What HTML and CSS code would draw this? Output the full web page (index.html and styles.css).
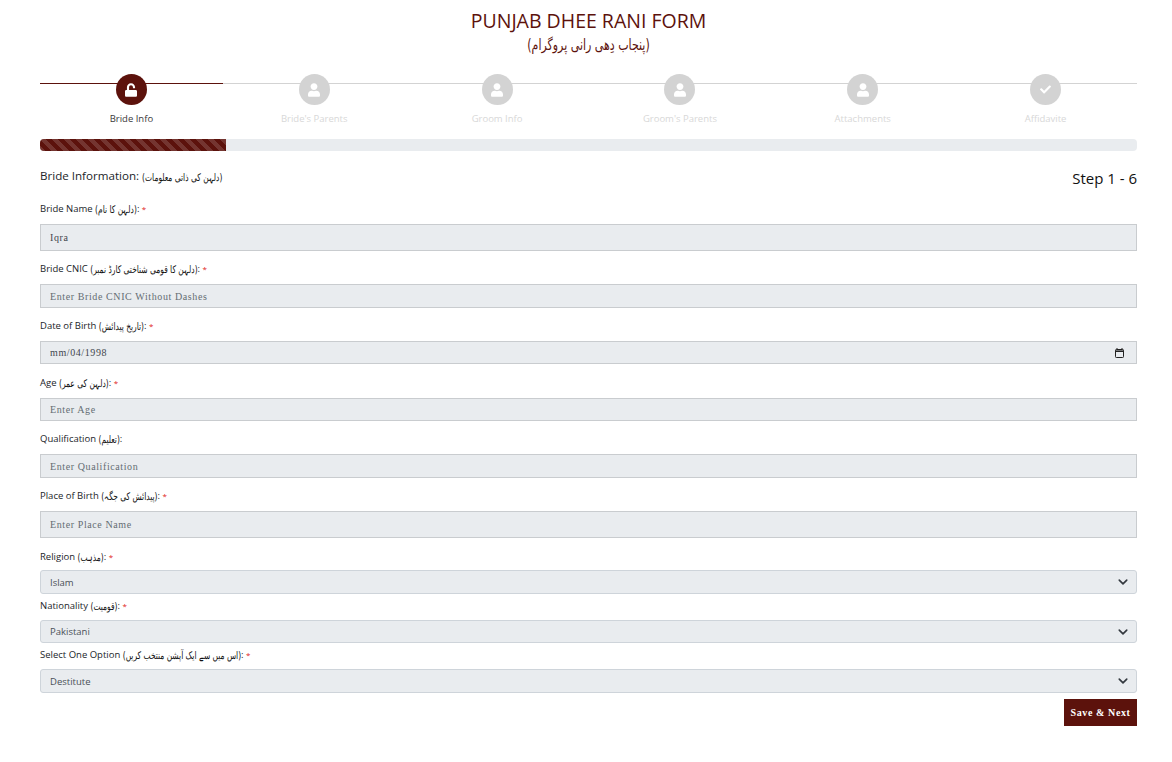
FILE: index.html
```html
<!DOCTYPE html>
<html lang="en">
<head>
<meta charset="UTF-8" />
<meta name="viewport" content="width=device-width, initial-scale=1" />
<title>Punjab Dhee Rani Form</title>
<link rel="stylesheet" href="styles.css">
</head>
<body>
<div class="page">
  <header class="form-title">
    <h1>PUNJAB DHEE RANI FORM</h1>
    <h2 dir="rtl" lang="ur">(پنجاب دِھی رانی پروگرام)</h2>
  </header>

  <ul class="stepper">
    <li class="step active">
      <span class="step-icon"><svg viewBox="0 0 448 512"><path d="M400 256H152V152.9c0-39.6 31.7-72.5 71.3-72.9 40-.4 72.7 32.1 72.7 72v16c0 13.3 10.7 24 24 24h32c13.3 0 24-10.7 24-24v-16C376 68 307.5-.3 223.5 0 139.5.3 72 69.5 72 153.5V256H48c-26.5 0-48 21.5-48 48v160c0 26.5 21.5 48 48 48h352c26.5 0 48-21.5 48-48V304c0-26.5-21.5-48-48-48z"/></svg></span>
      <span class="step-name">Bride Info</span>
    </li>
    <li class="step">
      <span class="step-icon"><svg viewBox="0 0 448 512"><path d="M224 256c70.7 0 128-57.3 128-128S294.7 0 224 0 96 57.3 96 128s57.3 128 128 128zm89.6 32h-16.7c-22.2 10.2-46.9 16-72.9 16s-50.6-5.8-72.9-16h-16.7C60.2 288 0 348.2 0 422.4V464c0 26.5 21.5 48 48 48h352c26.5 0 48-21.5 48-48v-41.6c0-74.2-60.2-134.4-134.4-134.4z"/></svg></span>
      <span class="step-name">Bride's Parents</span>
    </li>
    <li class="step">
      <span class="step-icon"><svg viewBox="0 0 448 512"><path d="M224 256c70.7 0 128-57.3 128-128S294.7 0 224 0 96 57.3 96 128s57.3 128 128 128zm89.6 32h-16.7c-22.2 10.2-46.9 16-72.9 16s-50.6-5.8-72.9-16h-16.7C60.2 288 0 348.2 0 422.4V464c0 26.5 21.5 48 48 48h352c26.5 0 48-21.5 48-48v-41.6c0-74.2-60.2-134.4-134.4-134.4z"/></svg></span>
      <span class="step-name">Groom Info</span>
    </li>
    <li class="step">
      <span class="step-icon"><svg viewBox="0 0 448 512"><path d="M224 256c70.7 0 128-57.3 128-128S294.7 0 224 0 96 57.3 96 128s57.3 128 128 128zm89.6 32h-16.7c-22.2 10.2-46.9 16-72.9 16s-50.6-5.8-72.9-16h-16.7C60.2 288 0 348.2 0 422.4V464c0 26.5 21.5 48 48 48h352c26.5 0 48-21.5 48-48v-41.6c0-74.2-60.2-134.4-134.4-134.4z"/></svg></span>
      <span class="step-name">Groom's Parents</span>
    </li>
    <li class="step">
      <span class="step-icon"><svg viewBox="0 0 448 512"><path d="M224 256c70.7 0 128-57.3 128-128S294.7 0 224 0 96 57.3 96 128s57.3 128 128 128zm89.6 32h-16.7c-22.2 10.2-46.9 16-72.9 16s-50.6-5.8-72.9-16h-16.7C60.2 288 0 348.2 0 422.4V464c0 26.5 21.5 48 48 48h352c26.5 0 48-21.5 48-48v-41.6c0-74.2-60.2-134.4-134.4-134.4z"/></svg></span>
      <span class="step-name">Attachments</span>
    </li>
    <li class="step">
      <span class="step-icon icon-check"><svg viewBox="0 0 512 512"><path d="M173.898 439.404l-166.4-166.4c-9.997-9.997-9.997-26.206 0-36.204l36.203-36.204c9.997-9.998 26.207-9.998 36.204 0L192 312.69 432.095 72.596c9.997-9.997 26.207-9.997 36.204 0l36.203 36.204c9.997 9.997 9.997 26.206 0 36.204l-294.4 294.401c-9.998 9.997-26.207 9.997-36.204-.001z"/></svg></span>
      <span class="step-name">Affidavite</span>
    </li>
  </ul>

  <div class="progress"><div class="progress-bar"></div></div>

  <div class="section-head">
    <h3>Bride Information: <span class="ur" dir="rtl" lang="ur">(دلہن کی ذاتی معلومات)</span></h3>
    <span class="step-count">Step 1 - 6</span>
  </div>

  <form>
    <div class="field">
      <label>Bride Name <span class="ur" dir="rtl" lang="ur">(دلہن کا نام)</span>: <span class="req">*</span></label>
      <input class="control control-lg" type="text" value="Iqra">
    </div>
    <div class="field">
      <label>Bride CNIC <span class="ur" dir="rtl" lang="ur">(دلہن کا قومی شناختی کارڈ نمبر)</span>: <span class="req">*</span></label>
      <input class="control" type="text" placeholder="Enter Bride CNIC Without Dashes">
    </div>
    <div class="field field-date">
      <label>Date of Birth <span class="ur" dir="rtl" lang="ur">(تاریخ پیدائش)</span>: <span class="req">*</span></label>
      <div class="date-wrap">
        <input class="control control-sm" type="text" value="mm/04/1998">
        <svg class="date-icon" viewBox="0 0 9 10"><path d="M2 0v1.5M7 0v1.5"/><rect x="0.5" y="1.5" width="8" height="8" rx="0.8"/><path class="date-top" d="M0.5 3.2h8"/></svg>
      </div>
    </div>
    <div class="field">
      <label>Age <span class="ur" dir="rtl" lang="ur">(دلہن کی عمر)</span>: <span class="req">*</span></label>
      <input class="control control-sm" type="text" placeholder="Enter Age">
    </div>
    <div class="field">
      <label>Qualification <span class="ur" dir="rtl" lang="ur">(تعلیم)</span>:</label>
      <input class="control" type="text" placeholder="Enter Qualification">
    </div>
    <div class="field field-last">
      <label>Place of Birth <span class="ur" dir="rtl" lang="ur">(پیدائش کی جگہ)</span>: <span class="req">*</span></label>
      <input class="control control-lg" type="text" placeholder="Enter Place Name">
    </div>
    <div class="field field-select field-religion">
      <label>Religion <span class="ur" dir="rtl" lang="ur">(مذہب)</span>: <span class="req">*</span></label>
      <select class="picker"><option>Islam</option></select>
    </div>
    <div class="field field-select">
      <label>Nationality <span class="ur" dir="rtl" lang="ur">(قومیت)</span>: <span class="req">*</span></label>
      <select class="picker picker-sm"><option>Pakistani</option></select>
    </div>
    <div class="field field-select">
      <label>Select One Option <span class="ur" dir="rtl" lang="ur">(اس میں سے ایک آپشن منتخب کریں)</span>: <span class="req">*</span></label>
      <select class="picker"><option>Destitute</option></select>
    </div>
    <div class="actions">
      <button type="button" class="btn-next">Save &amp; Next</button>
    </div>
  </form>
</div>
</body>
</html>
```

FILE: styles.css
```css
/* --- RESET & BASE --- */
*, *::before, *::after {
  box-sizing: border-box;
}
body {
  margin: 0;
  background: #fff;
  color: #212529;
  font-family: 'Open Sans', 'Noto Sans', sans-serif;
  font-size: 9.5px;
}
.page {
  padding: 10px 35px 0 40px;
}
/* no nastaliq font here, so the urdu is stretched a bit to get its height */
.ur {
  display: inline-block;
  font-family: 'DejaVu Sans', sans-serif;
  font-size: 7.5px;
  color: #111;
  transform: scaleY(1.4);
}

/* --- TITLE --- */
.form-title {
  text-align: center;
  color: #5c120c;
}
.form-title h1 {
  margin: 0;
  font-size: 19.5px;
  font-weight: 400;
  line-height: 22px;
}
.form-title h2 {
  margin: 3px 0 0;
  font-family: 'DejaVu Sans', sans-serif;
  font-size: 11px;
  font-weight: 400;
  line-height: 22px;
  transform: scaleY(1.4);
}

/* --- STEPPER --- */
.stepper {
  display: flex;
  margin: 17px 0 0;
  padding: 0;
  list-style: none;
}
.step {
  position: relative;
  flex: 1;
  display: flex;
  flex-direction: column;
  align-items: center;
  color: #d8d8d8;
}
.step::before {
  content: "";
  position: absolute;
  top: 9px;
  left: 0;
  right: 0;
  height: 1px;
  background: #d3d3d3;
}
.step.active {
  color: #3a3a3a;
}
.step.active::before {
  background: #5c120c;
}
.step-icon {
  position: relative;
  width: 31px;
  height: 31px;
  border-radius: 50%;
  background: #d3d3d3;
  display: flex;
  justify-content: center;
  align-items: center;
}
.step.active .step-icon {
  background: #5c120c;
}
.step-icon svg {
  width: 12px;
  height: 14px;
  fill: #fff;
}
.icon-check svg {
  width: 11px;
  height: 11px;
}
.step-name {
  margin-top: 7px;
  line-height: 14px;
}

/* --- PROGRESS --- */
.progress {
  height: 12px;
  margin-top: 13px;
  background: #e9ecef;
  border-radius: 4px;
  overflow: hidden;
}
.progress-bar {
  width: 17%;
  height: 100%;
  background-color: #5c120c;
  background-image: linear-gradient(45deg, rgba(255,255,255,.15) 25%, transparent 25%, transparent 50%, rgba(255,255,255,.15) 50%, rgba(255,255,255,.15) 75%, transparent 75%, transparent);
  background-size: 12px 12px;
}

/* --- SECTION HEAD --- */
.section-head {
  display: flex;
  justify-content: space-between;
  align-items: flex-start;
  margin-top: 15px;
  height: 32px;
}
.section-head h3 {
  margin: 0;
  font-size: 11.6px;
  font-weight: 400;
  line-height: 20px;
}
.step-count {
  margin-top: 2px;
  font-size: 15px;
  line-height: 20px;
  color: #111;
}

/* --- FIELDS --- */
.field {
  margin-bottom: 7px;
}
.field label {
  display: block;
  height: 20px;
  line-height: 21px;
  margin-bottom: 6px;
  white-space: nowrap;
}
.field-date,
.field-last {
  margin-bottom: 8px;
}
.req {
  color: #e02020;
  font-size: 8px;
}
.control {
  display: block;
  width: 100%;
  height: 24px;
  padding: 0 9px;
  background: #e9ecef;
  border: 1px solid #c9cccf;
  border-radius: 0;
  color: #3f464d;
  font-family: 'Liberation Serif', serif;
  font-size: 10px;
  letter-spacing: .6px;
}
.control::placeholder {
  color: #646c73;
  opacity: 1;
}
.control-lg {
  height: 27px;
}
.control-sm {
  height: 23px;
}
.date-wrap {
  position: relative;
}
.date-icon {
  position: absolute;
  top: 7px;
  right: 13px;
  width: 9px;
  height: 10px;
  fill: none;
  stroke: #222;
}
.date-top {
  stroke-width: 1.6;
}

/* --- SELECTS --- */
.field-select {
  margin-bottom: 1px;
}
.field-select label {
  margin-bottom: 5px;
}
.field-religion label {
  margin-bottom: 4px;
}
.picker {
  display: block;
  width: 100%;
  height: 24px;
  padding: 0 9px;
  appearance: none;
  background-color: #e9ecef;
  background-image: url("data:image/svg+xml,%3csvg xmlns='http://www.w3.org/2000/svg' viewBox='0 0 16 16'%3e%3cpath fill='none' stroke='%23343a40' stroke-linecap='round' stroke-linejoin='round' stroke-width='2.6' d='M2 5l6 6 6-6'/%3e%3c/svg%3e");
  background-repeat: no-repeat;
  background-position: right 7px center;
  background-size: 12px 10px;
  border: 1px solid #ced4da;
  border-radius: 3px;
  color: #495057;
  font-family: 'Open Sans', sans-serif;
  font-size: 9.5px;
}
.picker-sm {
  height: 23px;
}

/* --- BUTTON --- */
.actions {
  display: flex;
  justify-content: flex-end;
  margin-top: 6px;
}
.btn-next {
  width: 73px;
  height: 27px;
  padding: 0;
  border: none;
  background: #5c120c;
  color: #fff;
  font-family: 'Liberation Serif', serif;
  font-size: 10px;
  font-weight: 700;
  letter-spacing: .6px;
}
```
